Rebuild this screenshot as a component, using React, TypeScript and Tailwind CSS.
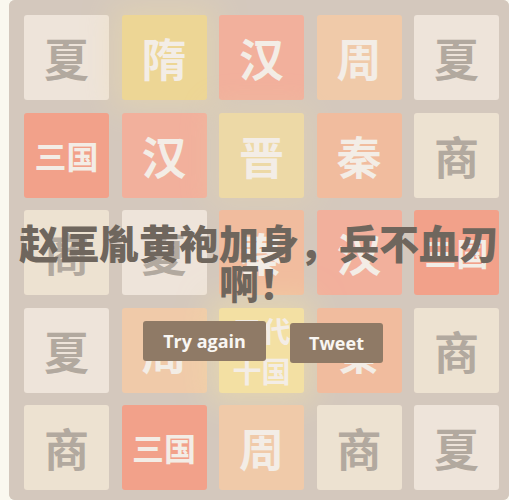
type Tile = { label: string; value: number };

const TILE_STYLE: Record<number, string> = {
  2: "bg-[#eee4da] text-[#776e65]",
  4: "bg-[#ede0c8] text-[#776e65]",
  8: "bg-[#f2b179] text-[#f9f6f2]",
  16: "bg-[#f59563] text-[#f9f6f2]",
  32: "bg-[#f67c5f] text-[#f9f6f2]",
  64: "bg-[#f65e3b] text-[#f9f6f2]",
  128: "bg-[#edcf72] text-[#f9f6f2] shadow-[0_0_30px_10px_rgba(243,215,116,0.24)]",
  512: "bg-[#edc850] text-[#f9f6f2] shadow-[0_0_30px_10px_rgba(243,215,116,0.4)]",
  2048: "bg-[#f8dc6c] text-[#f9f6f2] shadow-[0_0_30px_10px_rgba(243,215,116,0.56)]",
};

const LABELS: Record<number, string> = {
  2: "夏",
  4: "商",
  8: "周",
  16: "秦",
  32: "汉",
  64: "三国",
  128: "晋",
  512: "隋",
  2048: "五代十国",
};

const BOARD: number[][] = [
  [2, 512, 32, 8, 2],
  [64, 32, 128, 16, 4],
  [4, 2, 16, 32, 64],
  [2, 8, 2048, 16, 4],
  [4, 64, 8, 4, 2],
];

function TileCell({ tile }: { tile: Tile }) {
  const size =
    tile.label.length >= 4
      ? "text-[29px] leading-[40px] px-[12px]"
      : tile.label.length === 2
        ? "text-[32px] leading-[85px]"
        : "text-[45px] leading-[85px]";
  return (
    <div
      className={`flex items-center justify-center rounded-[3px] text-center font-bold ${TILE_STYLE[tile.value]} ${size}`}
    >
      <span className="break-all">{tile.label}</span>
    </div>
  );
}

export default function App() {
  const tiles: Tile[] = BOARD.flat().map((value) => ({ value, label: LABELS[value] }));

  return (
    <div
      className="min-h-screen bg-[#faf8ef]"
      style={{ fontFamily: '"Noto Sans CJK SC", "Noto Sans", sans-serif' }}
    >
      <div className="relative ml-[9px] h-[500px] w-[500px] rounded-[6px] bg-[#bbada0] pl-[15px] pt-[15px]">
        <div className="grid grid-cols-[repeat(5,85px)] auto-rows-[85px] gap-[12.5px]">
          {tiles.map((tile, i) => (
            <TileCell key={i} tile={tile} />
          ))}
        </div>

        {/* game over overlay */}
        <div className="absolute inset-0 flex flex-col items-center rounded-[6px] bg-[rgba(238,228,218,0.5)]">
          <p className="mt-[222px] w-full text-center text-[40px] font-black leading-[40px] text-[#6f665d]">
            赵匡胤黄袍加身，兵不血刃啊！
          </p>
          <div
            className="mt-[19px] flex items-start gap-6 pl-[8px]"
            style={{ fontFamily: '"Open Sans", Arial, sans-serif' }}
          >
            <button className="h-10 w-[123px] rounded-[3px] bg-[#8f7a66] text-[18px] font-bold leading-[40px] text-[#f9f6f2]">
              Try again
            </button>
            <a className="mt-[2px] h-10 w-[93px] rounded-[3px] bg-[#8f7a66] text-center text-[18px] font-bold leading-[40px] text-[#f9f6f2]">
              Tweet
            </a>
          </div>
        </div>
      </div>
    </div>
  );
}
